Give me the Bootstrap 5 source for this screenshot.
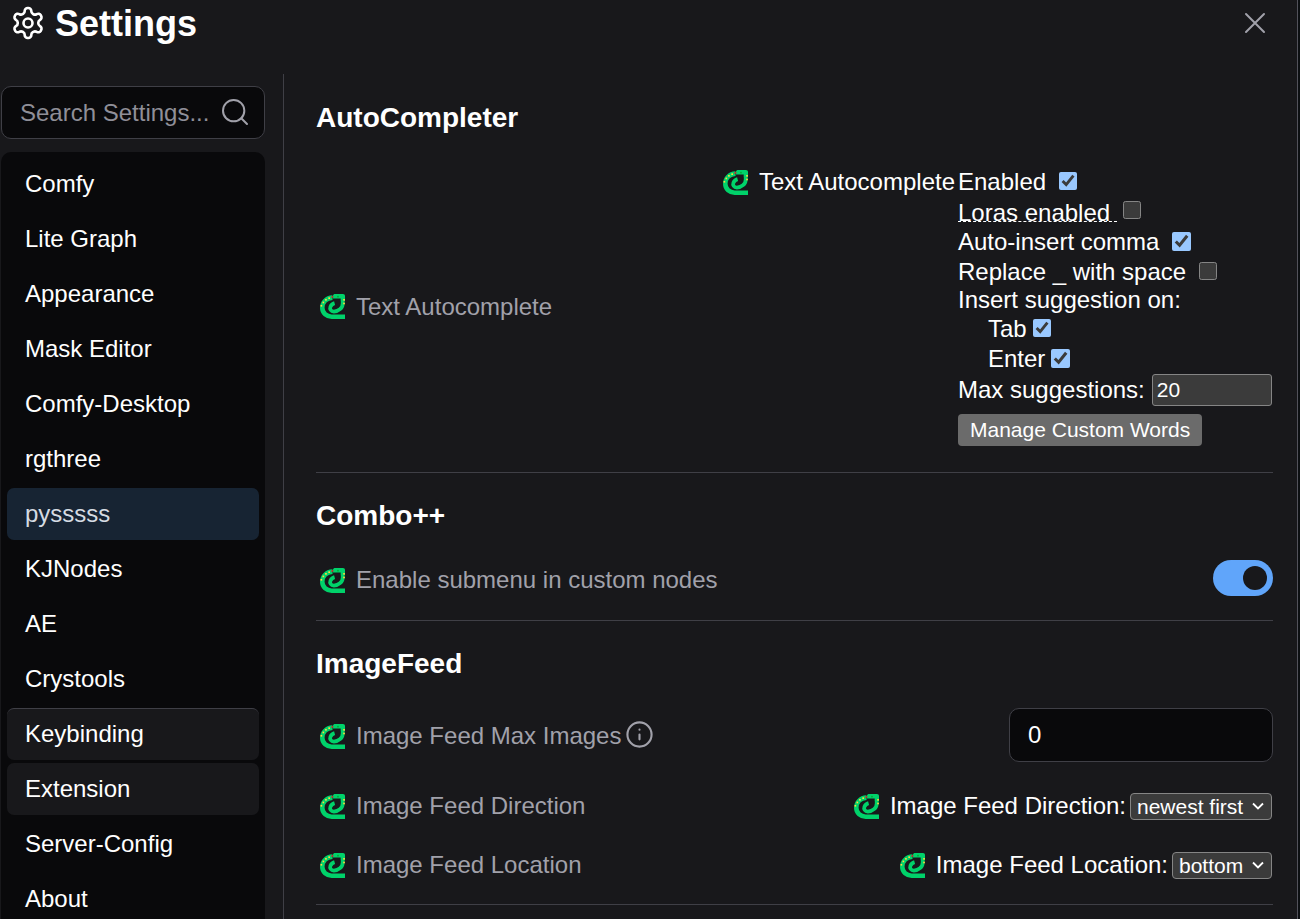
<!doctype html>
<html lang="en"><head><meta charset="utf-8"><title>Settings</title>
<link href="https://cdn.jsdelivr.net/npm/bootstrap@5.3.0/dist/css/bootstrap.min.css" rel="stylesheet">
<style>
html,body{height:919px;overflow:hidden}
body{background:#0c0f12;color:#fff;font-family:"Liberation Sans",Arial,sans-serif;font-size:24px;color-scheme:dark;line-height:30px}
.shell{width:1298px;height:919px;overflow:hidden;border-right:1px solid #52525b;background:#18181b}
.top-bar{height:46px;padding-left:10px;padding-right:30px}
.top-bar h1{font-size:36px;font-weight:700;margin:1px 0 0 9px;line-height:46px}
.gear{width:36px;height:36px}
.closer{width:24px;height:24px;color:#a1a1aa;background:none;border:0;padding:0;align-self:flex-start;margin-top:11px}
.closer svg{display:block}
.lower{height:873px;margin-top:28px}
.side{width:284px;flex:none;padding:12px 18px 0 1px;border-right:1px solid #3f3f46}
.finder{height:53px;background:#09090b;border:1px solid #3f3f46;border-radius:10px;color:#fff;font-size:24px;padding:0 50px 0 18px;box-shadow:none}
.finder::placeholder{color:#8f8f98;opacity:1}
.finder:focus{background:#09090b;color:#fff;border-color:#3f3f46;box-shadow:none}
.lens{position:absolute;right:14px;top:10px;width:32px;height:32px;color:#a1a1aa}
.menu-box{margin-top:13px;background:#09090b;border-radius:10px 10px 0 0;padding:6px;gap:3px;--bs-list-group-bg:transparent}
.menu-box .list-group-item{height:52px;background:transparent;color:#fff;border:0;border-radius:7px;padding:0 18px;line-height:52px;font-size:24px;flex:none}
.menu-box .list-group-item.picked{background:#172433;color:#d5dbe2}
.menu-box .list-group-item.hovered{background:#18181b}
.menu-box .list-group-item.edge{border-top:1px solid #3f3f46;line-height:50px}
.pane{flex:1;padding:28px 24px 0 32px;min-width:0}
.pane h2{font-size:28px;font-weight:700;line-height:32px;margin:0}
.sep{height:1px;background:#3f3f46;margin:26px 0 27px}
.sep.mid{margin:24px 0 27px}
.sep.end{margin-top:25px}
.dim{color:#a1a1aa}
.lift2{padding-top:4px}
.lift1{padding-top:2px}
.snake{width:25px;height:25px;flex:none;margin-right:11px}
.auto-row{margin-top:33px}
.combo-row{margin-top:28px}
.auto-tools{width:315px;flex:none;font-size:24px;margin-left:3px}
.tool-line{height:30px;display:flex;align-items:center;white-space:pre}
.tool-line.short{height:29px}
.tool-line.shorter{height:28px}
.tool-line.taller{height:31px}
.tool-line input[type=checkbox]{width:18px;height:18px;accent-color:#99c8ff;flex:none;margin:0 0 2px 13px}
.tool-line input.near{margin-left:6px;margin-bottom:2px}
.tool-line input.nearer{margin-left:6px;margin-bottom:2px}
.tool-line input.tight{margin-left:6px;margin-bottom:4px}
.tool-line input[type=checkbox].wider{width:19px;height:19px}
.indent{padding-left:30px}
.dashy{border-bottom:1px dashed #fff;line-height:21px;height:20px;display:inline-block}
.num-small{width:120px;height:32px;background:#3b3b3b;border:1px solid #858585;border-radius:3px;color:#fff;font-size:21px;padding:0 4px;margin:1px 0 0 7px;line-height:28px}
.custom-btn{background:#6b6b6b;border:0;border-radius:4px;color:#fff;font-size:21px;line-height:32px;padding:0 12px;margin-top:9px;display:block}
.toggler{width:60px;height:36px;background:#60a5fa;border-radius:18px;padding:6px;flex:none}
.toggler span{display:block;width:24px;height:24px;border-radius:50%;background:#18181b}
.big-num{width:264px;height:54px;background:#09090b;border:1px solid #3f3f46;border-radius:10px;color:#fff;font-size:24px;padding:0 18px;flex:none}
.pick{height:27px;appearance:none;background-color:#3b3b3b;background-image:url("data:image/svg+xml,%3Csvg xmlns='http://www.w3.org/2000/svg' viewBox='0 0 12 8'%3E%3Cpath d='M1 1.500l5 5 5-5' fill='none' stroke='%23fff' stroke-width='1.800'/%3E%3C/svg%3E");background-repeat:no-repeat;background-position:right 7px center;background-size:12px 8px;border:1px solid #858585;border-radius:4px;color:#fff;font-size:21px;line-height:24px;padding:1px 0 0 6px;margin-left:4px;margin-right:1px}
.pick.wide{width:142px}.pick.narrow{width:100px}
.info{width:29px;height:29px;margin-left:4px;color:#a1a1aa;margin-top:-4px}
.mt-feed{margin-top:28px}
.feed-row{margin-top:30px;height:28px}
.feed-row.next{margin-top:31px}
</style></head><body>
<svg width="0" height="0" class="position-absolute"><defs>
<symbol id="snk" viewBox="0 0 24 24">
<path d="M12 3.500C6 3.700 2.200 8 2.200 13.200c0 5.400 4.300 8.600 9 8.600H24" fill="none" stroke="#00d26a" stroke-width="4.400"/>
<path d="M21.800 2v7c0 4.500-4 7.800-8.500 7.800-2.800 0-4.200-2.300-3.300-4.500.6-1.500 2.200-3 4-3.500" fill="none" stroke="#00d26a" stroke-width="3.600"/>
<path d="M12.500 1.500C12.500.5 13.500 0 14.500 0h7.500c1.300 0 2 .7 2 2v5h-4V4.200h-7.500z" fill="#00d26a"/>
<path d="M10.500 3.800l1-2.200 2 1.200z" fill="#e5202e"/>
<g fill="#ffd83d"><rect x=".5" y="10.500" width="1.600" height="1.600"/><rect x="2.400" y="7.300" width="1.600" height="1.600"/><rect x="4.900" y="4.800" width="1.600" height="1.600"/><rect x="8" y="3.200" width="1.600" height="1.600"/><rect x="22.300" y="4.800" width="1.600" height="1.600"/><rect x="22.300" y="8.300" width="1.600" height="1.600"/></g>
<rect x="16.500" y="1.800" width="1.500" height="1.500" fill="#0a3"/>
</symbol></defs></svg>
<div class="shell">
<div class="top-bar d-flex align-items-center justify-content-between">
<div class="d-flex align-items-center">
<svg class="gear" viewBox="0 0 24 24" fill="none" stroke="currentColor" stroke-width="1.750" stroke-linecap="round" stroke-linejoin="round"><path d="M12.220 2h-.44a2 2 0 0 0-2 2v.18a2 2 0 0 1-1 1.730l-.43.25a2 2 0 0 1-2 0l-.15-.08a2 2 0 0 0-2.730.73l-.22.38a2 2 0 0 0 .73 2.730l.15.1a2 2 0 0 1 1 1.720v.51a2 2 0 0 1-1 1.740l-.15.09a2 2 0 0 0-.73 2.730l.22.38a2 2 0 0 0 2.730.73l.15-.08a2 2 0 0 1 2 0l.43.25a2 2 0 0 1 1 1.730V20a2 2 0 0 0 2 2h.44a2 2 0 0 0 2-2v-.18a2 2 0 0 1 1-1.730l.43-.25a2 2 0 0 1 2 0l.15.08a2 2 0 0 0 2.730-.73l.22-.39a2 2 0 0 0-.73-2.730l-.15-.08a2 2 0 0 1-1-1.740v-.5a2 2 0 0 1 1-1.740l.15-.09a2 2 0 0 0 .73-2.730l-.22-.38a2 2 0 0 0-2.730-.73l-.15.08a2 2 0 0 1-2 0l-.43-.25a2 2 0 0 1-1-1.730V4a2 2 0 0 0-2-2z"/><circle cx="12" cy="12" r="3"/></svg>
<h1>Settings</h1>
</div>
<button class="closer" type="button" aria-label="Close"><svg width="24" height="24" viewBox="0 0 24 24" fill="none" stroke="currentColor" stroke-width="2" stroke-linecap="round"><path d="M3 3l18 18M21 3L3 21"/></svg></button>
</div>
<div class="lower d-flex">
<aside class="side">
<div class="position-relative">
<input class="form-control finder" placeholder="Search Settings...">
<svg class="lens" viewBox="0 0 24 24" fill="none" stroke="currentColor" stroke-width="1.500" stroke-linecap="round" stroke-linejoin="round"><circle cx="11" cy="11" r="8"/><path d="m21 21-4.300-4.300"/></svg>
</div>
<div class="list-group menu-box">
<div class="list-group-item">Comfy</div>
<div class="list-group-item">Lite Graph</div>
<div class="list-group-item">Appearance</div>
<div class="list-group-item">Mask Editor</div>
<div class="list-group-item">Comfy-Desktop</div>
<div class="list-group-item">rgthree</div>
<div class="list-group-item picked">pysssss</div>
<div class="list-group-item">KJNodes</div>
<div class="list-group-item">AE</div>
<div class="list-group-item">Crystools</div>
<div class="list-group-item hovered edge">Keybinding</div>
<div class="list-group-item hovered">Extension</div>
<div class="list-group-item">Server-Config</div>
<div class="list-group-item">About</div>
</div>
</aside>
<main class="pane">
<h2>AutoCompleter</h2>
<div class="auto-row d-flex justify-content-between align-items-center">
<div class="d-flex align-items-center dim"><svg class="snake ms-1"><use href="#snk"/></svg>Text Autocomplete</div>
<div class="d-flex align-items-start">
<div class="d-flex align-items-center tool-line"><svg class="snake"><use href="#snk"/></svg>Text Autocomplete</div>
<div class="auto-tools">
<div class="tool-line">Enabled<input type="checkbox" checked></div>
<div class="tool-line"><span class="dashy">Loras enabled </span><input class="tight" type="checkbox"></div>
<div class="tool-line">Auto-insert comma<input class="wider" type="checkbox" checked></div>
<div class="tool-line short">Replace _ with space<input type="checkbox"></div>
<div class="tool-line shorter">Insert suggestion on:</div>
<div class="tool-line indent">Tab<input class="near" type="checkbox" checked></div>
<div class="tool-line indent">Enter<input class="nearer wider" type="checkbox" checked></div>
<div class="tool-line taller">Max suggestions:<input class="num-small" type="text" value="20"></div>
<button class="custom-btn" type="button">Manage Custom Words</button>
</div>
</div>
</div>
<div class="sep"></div>
<h2>Combo++</h2>
<div class="d-flex justify-content-between align-items-center combo-row">
<div class="d-flex align-items-center dim lift2"><svg class="snake ms-1"><use href="#snk"/></svg>Enable submenu in custom nodes</div>
<div class="toggler d-flex justify-content-end"><span></span></div>
</div>
<div class="sep mid"></div>
<h2>ImageFeed</h2>
<div class="d-flex justify-content-between align-items-center mt-feed">
<div class="d-flex align-items-center dim lift1"><svg class="snake ms-1"><use href="#snk"/></svg>Image Feed Max Images<svg class="info" viewBox="0 0 24 24" fill="none" stroke="currentColor" stroke-width="1.750" stroke-linecap="round"><circle cx="12" cy="12" r="10"/><path d="M12 16v-4M12 8h.01"/></svg></div>
<input class="big-num" type="text" value="0">
</div>
<div class="d-flex justify-content-between align-items-center feed-row">
<div class="d-flex align-items-center dim"><svg class="snake ms-1"><use href="#snk"/></svg>Image Feed Direction</div>
<div class="d-flex align-items-center"><svg class="snake"><use href="#snk"/></svg>Image Feed Direction:<select class="pick wide"><option>newest first</option></select></div>
</div>
<div class="d-flex justify-content-between align-items-center feed-row next">
<div class="d-flex align-items-center dim"><svg class="snake ms-1"><use href="#snk"/></svg>Image Feed Location</div>
<div class="d-flex align-items-center"><svg class="snake"><use href="#snk"/></svg>Image Feed Location:<select class="pick narrow"><option>bottom</option></select></div>
</div>
<div class="sep end"></div>
</main>
</div>
</div>
</body></html>
